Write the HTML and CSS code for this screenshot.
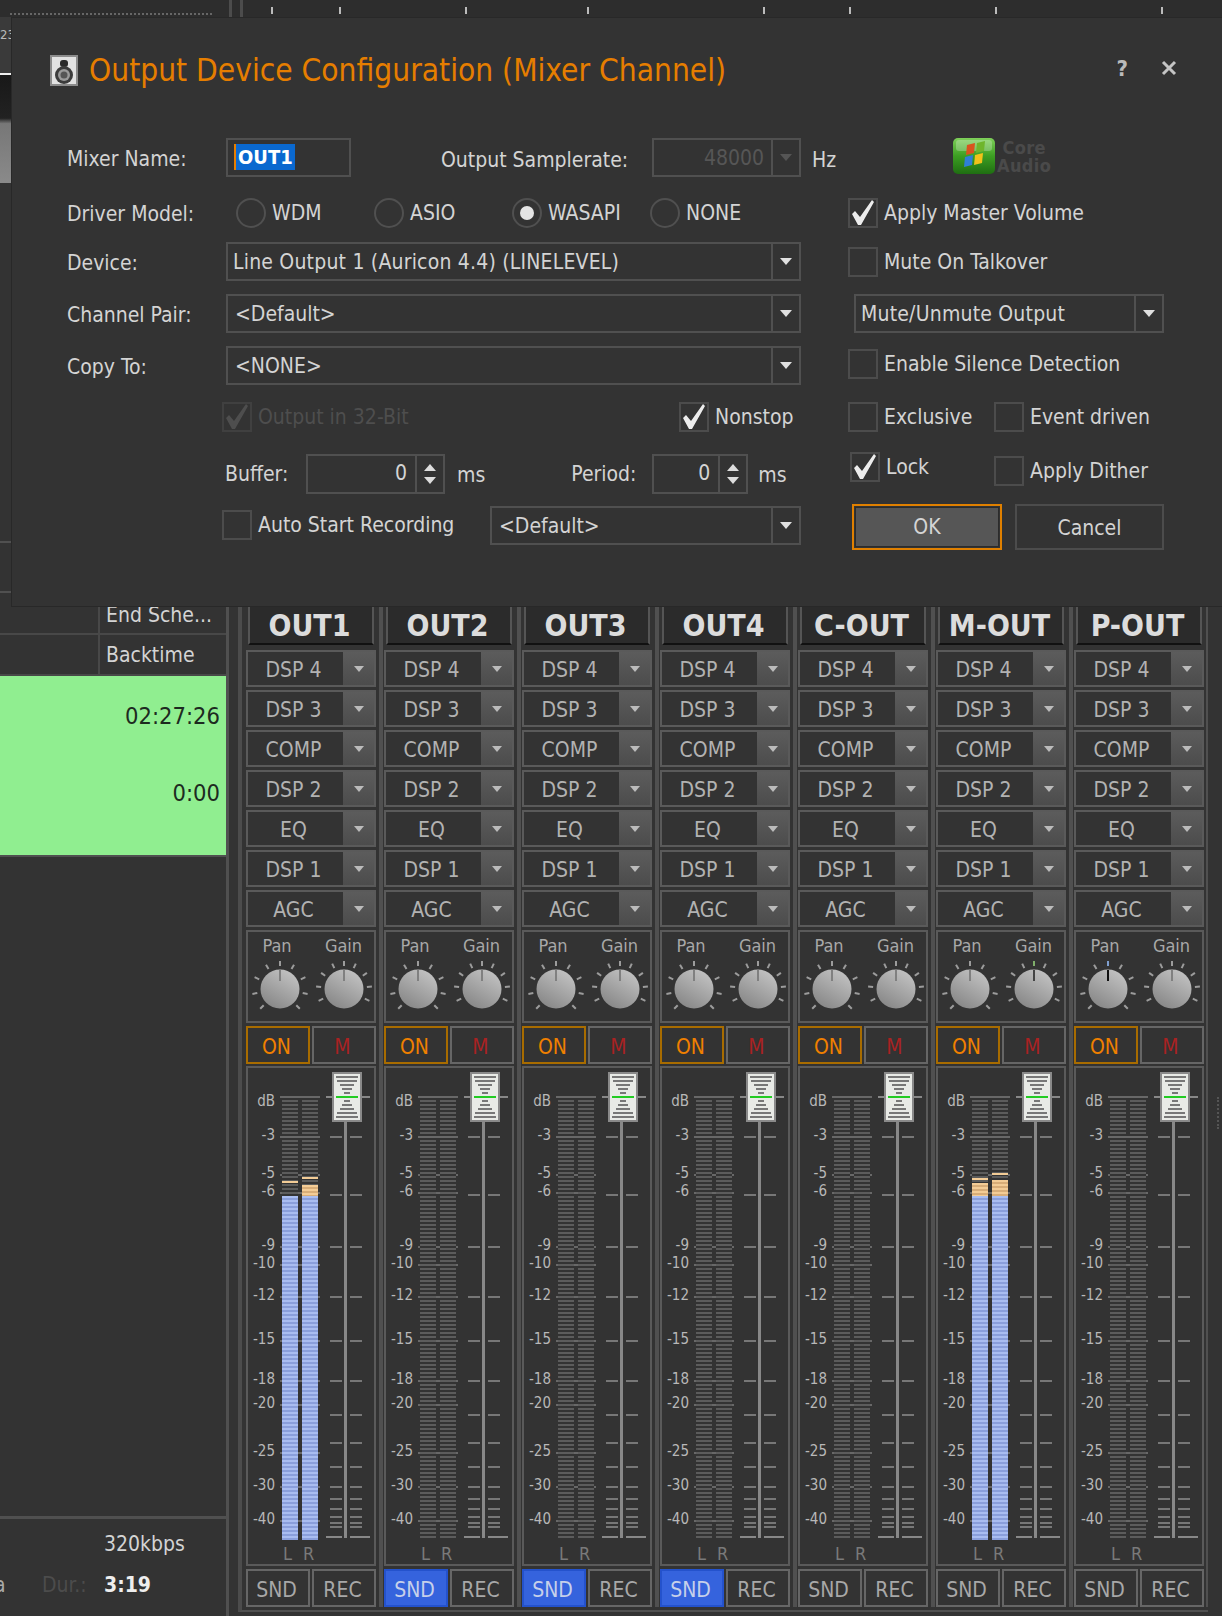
FILE: index.html
```html
<!DOCTYPE html>
<html lang="en">
<head>
  <meta charset="UTF-8" />
  <title>Output Device Configuration</title>
  <link rel="stylesheet" href="styles.css">
</head>
<body>

  <svg class="defs" width="0" height="0">
    <defs>
      <linearGradient id="knobFill" x1="0.8" y1="0" x2="0.2" y2="1">
        <stop offset="0" stop-color="#c4c4c4" />
        <stop offset="1" stop-color="#858585" />
      </linearGradient>
      <linearGradient id="logoFill" x1="0" y1="0" x2="0" y2="1">
        <stop offset="0" stop-color="#7fd05a" />
        <stop offset="0.5" stop-color="#3c9e22" />
        <stop offset="1" stop-color="#1f6e12" />
      </linearGradient>
    </defs>
  </svg>

  <div class="topbar">
    <div class="dotted"></div>
    <div class="topbar-lines"></div>
    <i class="tick t1"></i><i class="tick t2"></i><i class="tick t3"></i><i class="tick t4"></i>
    <i class="tick t5"></i><i class="tick t6"></i><i class="tick t7"></i><i class="tick t8"></i>
  </div>

  <div class="main">
    <div class="side">
      <div class="wave-top"><span>23</span></div>
      <div class="wave"></div>
      <div class="side-block b1"></div>
      <div class="side-block b2"></div>
      <div class="side-row r1"><span>End Sche...</span></div>
      <div class="side-row r2"><span>Backtime</span></div>
      <div class="green">
        <div>02:27:26</div>
        <div>0:00</div>
      </div>
      <div class="side-fill"></div>
      <div class="info">
        <div class="info-row"><span class="info-val">320kbps</span></div>
        <div class="info-row"><span class="info-a">a</span><span class="info-key">Dur.:</span><span class="info-val strong">3:19</span></div>
        <div class="info-row"><span class="info-val dim">10:51</span></div>
      </div>
    </div>
    <div class="mixer" id="mixer"></div>
    <div class="grip"></div>
  </div>

  <div class="dialog">
    <div class="dialog-head">
      <svg class="speaker" width="28" height="31" viewBox="0 0 28 31">
        <rect x="0" y="0" width="28" height="31" fill="#8c8c8c" />
        <rect x="2" y="2" width="24" height="27" fill="#e2e2e2" />
        <rect x="10" y="5" width="8" height="7" rx="3" fill="#2a2a2a" />
        <circle cx="14" cy="20" r="9" fill="#3c3c3c" />
        <circle cx="14" cy="20" r="6" fill="#9a9a9a" />
        <circle cx="14" cy="20" r="3.5" fill="#555" />
      </svg>
      <h1>Output Device Configuration (Mixer Channel)</h1>
      <span class="head-btn help">?</span>
      <svg class="head-btn close" width="16" height="16" viewBox="0 0 16 16">
        <path d="M2 2 L14 14 M14 2 L2 14" stroke="#c4c4c4" stroke-width="3" />
      </svg>
    </div>

    <div class="form">
      <div class="row">
        <span class="label">Mixer Name:</span>
        <div class="field name-field"><span class="selected">OUT1</span></div>
        <span class="label rate-label">Output Samplerate:</span>
        <div class="combo rate disabled"><span class="combo-text right">48000</span><span class="drop"></span></div>
        <span class="unit hz">Hz</span>
      </div>
      <div class="row">
        <div class="logo">
          <svg width="42" height="36" viewBox="0 0 42 36">
            <rect x="0" y="0" width="42" height="36" rx="5" fill="url(#logoFill)" />
            <rect x="3" y="2" width="36" height="11" rx="3" fill="#ffffff" opacity="0.25" />
            <path d="M14 7 L22 5 L21 15 L13 17 Z" fill="#d9531e" />
            <path d="M24 5 L32 3 L31 13 L23 15 Z" fill="#6fb52c" />
            <path d="M12 19 L20 17 L19 27 L11 29 Z" fill="#2f7fd6" />
            <path d="M22 17 L30 15 L29 25 L21 27 Z" fill="#f2c21a" />
          </svg>
          <span class="logo-text">Core<br>Audio</span>
        </div>
      </div>

      <div class="row">
        <span class="label">Driver Model:</span>
        <div class="radios">
          <span class="radio"><i class="dot"></i>WDM</span>
          <span class="radio"><i class="dot"></i>ASIO</span>
          <span class="radio"><i class="dot on"></i>WASAPI</span>
          <span class="radio"><i class="dot"></i>NONE</span>
        </div>
      </div>
      <div class="row">
        <span class="check"><i class="box on"></i>Apply Master Volume</span>
      </div>

      <div class="row">
        <span class="label">Device:</span>
        <div class="combo grow"><span class="combo-text tight">Line Output 1 (Auricon 4.4) (LINELEVEL)</span><span class="drop"></span></div>
      </div>
      <div class="row">
        <span class="check"><i class="box"></i>Mute On Talkover</span>
      </div>

      <div class="row">
        <span class="label">Channel Pair:</span>
        <div class="combo grow"><span class="combo-text">&lt;Default&gt;</span><span class="drop"></span></div>
      </div>
      <div class="row">
        <div class="combo mute"><span class="combo-text tight">Mute/Unmute Output</span><span class="drop"></span></div>
      </div>

      <div class="row">
        <span class="label">Copy To:</span>
        <div class="combo grow"><span class="combo-text">&lt;NONE&gt;</span><span class="drop"></span></div>
      </div>
      <div class="row up">
        <span class="check"><i class="box"></i>Enable Silence Detection</span>
      </div>

      <div class="row indent">
        <span class="check off wide"><i class="box on"></i>Output in 32-Bit</span>
        <span class="check"><i class="box on"></i>Nonstop</span>
      </div>
      <div class="row">
        <span class="check pair"><i class="box"></i>Exclusive</span>
        <span class="check"><i class="box"></i>Event driven</span>
      </div>

      <div class="row indent-b">
        <span class="label short">Buffer:</span>
        <div class="spin buffer"><span class="spin-val">0</span><span class="spin-btns"><i class="up-arrow"></i><i class="down-arrow"></i></span></div>
        <span class="unit ms">ms</span>
        <span class="label period">Period:</span>
        <div class="spin period-box"><span class="spin-val">0</span><span class="spin-btns"><i class="up-arrow"></i><i class="down-arrow"></i></span></div>
        <span class="unit ms last">ms</span>
      </div>
      <div class="row">
        <span class="check lock"><i class="box on"></i>Lock</span>
        <span class="check dither"><i class="box"></i>Apply Dither</span>
      </div>

      <div class="row indent">
        <span class="check auto"><i class="box"></i>Auto Start Recording</span>
        <div class="combo grow"><span class="combo-text">&lt;Default&gt;</span><span class="drop"></span></div>
      </div>
      <div class="row buttons">
        <div class="btn ok"><span>OK</span></div>
        <div class="btn cancel">Cancel</div>
      </div>
    </div>
  </div>

  <script src="script.js"></script>
</body>
</html>
```

FILE: styles.css
```css
* {
  box-sizing: border-box;
}

html, body {
  margin: 0;
  padding: 0;
}

body {
  width: 1222px;
  height: 1616px;
  overflow: hidden;
  position: relative;
  background: #333;
  color: #d4d4d4;
  font-family: "DejaVu Sans Condensed", "DejaVu Sans", sans-serif;
  font-stretch: condensed;
  font-size: 21px;
}

i {
  display: block;
}

.defs {
  position: absolute;
}

/* top ruler behind the dialog */
.topbar {
  height: 17px;
  background: #2d2d2d;
  position: relative;
}

.dotted {
  position: absolute;
  left: 10px;
  top: 13px;
  width: 202px;
  border-top: 2px dotted #666;
}

.topbar-lines {
  position: absolute;
  left: 229px;
  top: 0;
  width: 14px;
  height: 17px;
  border-left: 3px solid #4c4c4c;
  border-right: 3px solid #4c4c4c;
}

.tick {
  position: absolute;
  top: 7px;
  width: 2px;
  height: 7px;
  background: #bbb;
}

.t1 { left: 271px; }
.t2 { left: 339px; }
.t3 { left: 465px; }
.t4 { left: 587px; }
.t5 { left: 763px; }
.t6 { left: 849px; }
.t7 { left: 995px; }
.t8 { left: 1161px; }

.main {
  display: flex;
  height: 1599px;
}

/* left column */
.side {
  width: 229px;
  flex: none;
  border-right: 3px solid #505050;
  display: flex;
  flex-direction: column;
}

.side > * {
  flex: none;
}

.wave-top {
  height: 58px;
  background: #3a3a3a;
  border-bottom: 2px solid #eee;
  font-size: 13px;
  padding-top: 10px;
  color: #bbb;
}

.wave {
  height: 108px;
  background: linear-gradient(#181818 0, #222 40%, #777 45%, #8a8a8a 100%);
}

.side-block.b1 {
  height: 360px;
  border-bottom: 2px solid #505050;
}

.side-block.b2 {
  height: 50px;
  border-bottom: 2px solid #505050;
}

.side-row {
  padding-left: 106px;
  border-bottom: 2px solid #484848;
  position: relative;
  display: flex;
  align-items: center;
}

.side-row::before {
  content: "";
  position: absolute;
  left: 98px;
  top: 0;
  bottom: 0;
  border-left: 2px solid #484848;
}

.r1 {
  height: 42px;
  padding-top: 3px;
}

.r2 {
  height: 41px;
}

.green {
  height: 181px;
  background: #90ee90;
  color: #1d2a20;
  font-size: 23.5px;
  text-align: right;
  padding: 26px 6px 0 0;
  border-bottom: 2px solid #505050;
  display: flex;
  flex-direction: column;
  gap: 49px;
}

.side-fill {
  height: 662px;
  border-bottom: 3px solid #505050;
}

.info {
  padding-top: 4px;
}

.info-row {
  height: 41px;
  display: flex;
  align-items: center;
  position: relative;
  padding-left: 104px;
}

.info-val.strong {
  font-weight: bold;
  color: #eee;
}

.info-val.dim {
  color: #999;
}

.info-a {
  position: absolute;
  left: -6px;
  color: #aaa;
}

.info-key {
  position: absolute;
  left: 42px;
  color: #4c4c4c;
}

/* mixer strips */
.mixer {
  margin-left: 9px;
  border-left: 4px solid #4c4c4c;
  padding: 583px 0 3px 4px;
  border-bottom: 2px solid #505050;
  height: 1595px;
  display: flex;
  flex: none;
}

.strip {
  width: 137px;
  margin-right: 1px;
  padding-right: 3px;
  border-right: 4px solid #505050;
  display: flex;
  flex-direction: column;
  gap: 3px;
}

.strip:last-child {
  margin-right: 0;
  padding-right: 2px;
  width: 134px;
  border-right-width: 2px;
}

.strip-name {
  height: 45px;
  margin: 0 2px 2px;
  border-left: 2px solid #555;
  border-right: 2px solid #555;
  border-bottom: 2px solid #111;
  background: #2b2b2b;
  text-align: center;
  color: #dcdcdc;
  font-size: 30px;
  font-weight: bold;
  line-height: 45px;
  padding: 3px 3px 0 0;
}

.dsp {
  height: 37px;
  border: 2px solid #5a5a5a;
  display: flex;
  color: #b2b2b2;
  font-size: 21px;
}

.dsp-name {
  flex: 1;
  text-align: center;
  line-height: 36px;
  padding-right: 4px;
}

.dsp-drop {
  width: 31px;
  background: linear-gradient(#5c5c5c, #4c4c4c);
  display: flex;
  align-items: center;
  justify-content: center;
}

.arrow {
  width: 0;
  height: 0;
  border-left: 6px solid transparent;
  border-right: 6px solid transparent;
  border-top: 7px solid #d8d8d8;
}

.dsp-drop .arrow {
  border-left-width: 5px;
  border-right-width: 5px;
  border-top-width: 6px;
  border-top-color: #bbb;
}

.knobs {
  height: 93px;
  border: 2px solid #5a5a5a;
  display: flex;
}

.knob {
  width: 63px;
  text-align: center;
  color: #a8a8a8;
  font-size: 18px;
  line-height: 20px;
  padding-top: 4px;
}

.knob svg {
  display: block;
  margin: 1px auto 0;
}

.knob.pan {
  text-indent: -5px;
}

.knob.gain {
  margin-left: 1px;
}

.switches {
  display: flex;
  gap: 2px;
}

.switch {
  flex: 1;
  height: 38px;
  border: 2px solid #666;
  text-align: center;
  line-height: 38px;
  font-size: 21px;
  padding-right: 3px;
}

.switch.on-btn {
  border-color: #a86c00;
  color: #f08000;
}

.switch.mute-btn {
  color: #a82222;
}

.fader {
  height: 501px;
  margin-top: -1px;
  border: 2px solid #5a5a5a;
  position: relative;
}

.db {
  position: absolute;
  left: 0;
  width: 27px;
  text-align: right;
  font-size: 15px;
  line-height: 16px;
  margin-top: -7px;
  color: #b8b8b8;
  white-space: nowrap;
}

.meter-tick {
  position: absolute;
  left: 32px;
  width: 40px;
  height: 2px;
  background: #686868;
}

.meter-tick.over {
  z-index: 1;
}

.meter {
  position: absolute;
  top: 32px;
  width: 16px;
  height: 440px;
  background: repeating-linear-gradient(#5c5c5c 0 2px, #333 2px 4px);
}

.meter.l { left: 34px; }
.meter.r { left: 54px; }

.lit {
  position: absolute;
  left: 0;
  width: 16px;
  background: repeating-linear-gradient(#a9bdf1 0 2px, #8a9fdc 2px 4px);
  bottom: 0;
}

.hot {
  position: absolute;
  left: 0;
  width: 16px;
  background: repeating-linear-gradient(#f3cc96 0 2px, #d8ad78 2px 4px);
}

.peak {
  position: absolute;
  left: 0;
  width: 16px;
  height: 2px;
  background: #f3cc96;
}

.track {
  position: absolute;
  left: 96px;
  top: 50px;
  width: 3px;
  height: 420px;
  background: #888;
}

.fader-tick {
  position: absolute;
  left: 82px;
  width: 32px;
  height: 2px;
  background: linear-gradient(90deg, #777 0 12px, transparent 12px 20px, #777 20px);
}

.fader-tick.long {
  left: 78px;
  width: 44px;
  background: linear-gradient(90deg, #888 0 16px, transparent 16px 24px, #888 24px);
}

.handle {
  position: absolute;
  left: 84px;
  top: 4px;
}

.channel-lr {
  position: absolute;
  left: 35px;
  top: 476px;
  color: #7a7a7a;
  font-size: 18px;
  line-height: 20px;
  display: flex;
  gap: 11px;
}

.switch.snd-on {
  background: #3563dd;
  border-color: #2452cc;
}

.strip .switch.plain {
  color: #a8a8a8;
}

.strip .switch.snd-on {
  color: #c6d0ea;
}

.grip {
  width: 2px;
  height: 32px;
  margin: 1080px 0 0 9px;
  border-left: 2px dotted #555;
}

/* dialog */
.dialog {
  position: absolute;
  left: 11px;
  top: 17px;
  width: 1211px;
  height: 590px;
  background: #333;
  border: 1px solid #282828;
  border-right: none;
  z-index: 2;
}

.dialog-head {
  display: flex;
  align-items: center;
  height: 120px;
  padding: 0 45px 16px 38px;
}

.speaker {
  flex: none;
}

h1 {
  margin: 0 0 0 11px;
  flex: 1;
  font-size: 31.4px;
  font-weight: normal;
  color: #e67e00;
  white-space: nowrap;
}

.head-btn {
  margin-bottom: 4px;
}

.help {
  font-size: 22px;
  font-weight: bold;
  color: #bbb;
  margin-right: 33px;
}

.form {
  display: grid;
  grid-template-columns: 734px 316px;
  grid-template-rows: 55px 49px 52px 52px 51px 57px 52px 46px;
  column-gap: 47px;
  margin-left: 55px;
}

.row {
  display: flex;
  align-items: flex-start;
  height: 40px;
  white-space: nowrap;
}

.row > * {
  flex: none;
}

.label {
  width: 159px;
  line-height: 42px;
}

.label.short {
  width: 81px;
}

.rate-label {
  width: 211px;
  margin-left: 90px;
  line-height: 44px;
}

.field, .combo, .spin {
  height: 39px;
  border: 2px solid #505050;
  display: flex;
}

.name-field {
  width: 125px;
  padding: 4px 0 0 6px;
}

.selected {
  height: 26px;
  line-height: 27px;
  padding-left: 2px;
  padding-right: 2px;
  background: #0a68cf;
  color: #fff;
  border-left: 2px solid #e67e00;
  font-weight: bold;
  font-size: 20px;
}

.row > .combo.grow {
  flex: 1;
}

.combo.rate {
  width: 149px;
}

.combo.mute {
  width: 310px;
  margin-left: 6px;
}

.combo-text {
  flex: 1;
  line-height: 37px;
  padding-left: 7px;
}

.combo-text.tight {
  padding-left: 5px;
  letter-spacing: 0.2px;
}

.combo-text.right {
  text-align: right;
  padding-right: 7px;
}

.disabled .combo-text {
  color: #565656;
}

.drop {
  width: 28px;
  border-left: 2px solid #505050;
  display: flex;
  align-items: center;
  justify-content: center;
}

.drop::after {
  content: "";
  border-left: 6px solid transparent;
  border-right: 6px solid transparent;
  border-top: 7px solid #e0e0e0;
}

.disabled .drop::after {
  border-top-color: #555;
}

.unit {
  line-height: 44px;
}

.hz {
  margin-left: 11px;
}

.ms {
  margin-left: 12px;
  line-height: 42px;
}

.ms.last {
  margin-left: 10px;
}

.logo {
  display: flex;
  margin-left: 105px;
}

.logo-text {
  margin: 1px 0 0 2px;
  color: #4a4a4a;
  font-weight: bold;
  font-size: 18px;
  line-height: 18px;
  letter-spacing: 0.4px;
  text-align: center;
}

.radios {
  display: flex;
  margin-left: 10px;
  padding-top: 5px;
}

.radio {
  width: 138px;
  display: flex;
  align-items: center;
  gap: 6px;
}

.dot {
  width: 30px;
  height: 30px;
  border: 2px solid #505050;
  border-radius: 50%;
  display: flex;
  align-items: center;
  justify-content: center;
}

.dot.on::after {
  content: "";
  width: 14px;
  height: 14px;
  border-radius: 50%;
  background: #e4e4e4;
}

.check {
  display: flex;
  align-items: center;
  gap: 6px;
  height: 30px;
  margin-top: 5px;
}

.box {
  width: 30px;
  height: 30px;
  border: 2px solid #4c4c4c;
  position: relative;
}

.box.on::after {
  content: "";
  position: absolute;
  inset: 0;
  background: #ececec;
  clip-path: polygon(2px 14px, 5px 11px, 10px 17px, 22px 0, 24px 2px, 11px 25px, 8px 25px);
}

.check.off {
  color: #4e4e4e;
}

.check.off .box {
  border-color: #404040;
}

.check.off .box.on::after {
  background: #4e4e4e;
}

.indent {
  padding-left: 155px;
}

.indent-b {
  padding-left: 158px;
}

.wide {
  width: 457px;
}

.auto {
  width: 268px;
  margin-top: 4px;
}

.row.up .check {
  margin-top: 3px;
}

.pair {
  width: 146px;
}

.spin {
  height: 40px;
}

.buffer {
  width: 139px;
}

.period-box {
  width: 96px;
}

.spin-val {
  flex: 1;
  text-align: right;
  padding-right: 8px;
  line-height: 35px;
}

.spin-btns {
  width: 28px;
  border-left: 2px solid #505050;
  display: flex;
  flex-direction: column;
  align-items: center;
  justify-content: center;
  gap: 6px;
}

.up-arrow, .down-arrow {
  width: 0;
  height: 0;
  border-left: 6px solid transparent;
  border-right: 6px solid transparent;
}

.up-arrow {
  border-bottom: 7px solid #ddd;
}

.down-arrow {
  border-top: 7px solid #ddd;
}

.label.period {
  width: 81px;
  margin-left: 86px;
  line-height: 40px;
}

.label.short {
  line-height: 40px;
}

.lock {
  width: 144px;
  margin-left: 2px;
  margin-top: -2px;
}

.dither {
  margin-top: 2px;
}

.buttons {
  height: 46px;
  margin-top: -2px;
}

.btn {
  height: 46px;
  text-align: center;
  line-height: 44px;
}

.ok {
  width: 150px;
  margin-left: 4px;
  border: 2px solid #e08000;
  background: #333;
  padding: 1px;
}

.ok span {
  display: block;
  height: 40px;
  line-height: 38px;
  background: #565656;
  border: 1px solid #2c2c2c;
}

.cancel {
  width: 149px;
  margin-left: 13px;
  border: 2px solid #4c4c4c;
}
```

FILE: script.js
```js
// mixer strips, all the same except for name, meters and knob pointers
const channels = [
  { name: "OUT1", meter: { l: { peak: 1181, hot: 1196 }, r: { peak: 1177, hot: 1185 } } },
  { name: "OUT2", snd: true },
  { name: "OUT3", snd: true },
  { name: "OUT4", snd: true },
  { name: "C-OUT" },
  { name: "M-OUT", gain: "moved", meter: { l: { peak: 1178, hot: 1183 }, r: { peak: 1173, hot: 1180 } } },
  { name: "P-OUT", pan: "moved" }
];

const dspNames = ["DSP 4", "DSP 3", "COMP", "DSP 2", "EQ", "DSP 1", "AGC"];

// [label, label centre, tick y], in page pixels
const dbScale = [
  ["dB", 1100, 1097], ["-3", 1134, 1137], ["-5", 1172, 1175], ["-6", 1190, 1193],
  ["-9", 1244, 1247], ["-10", 1262, 1265], ["-12", 1294, 1297], ["-15", 1338, 1341],
  ["-18", 1378, 1381], ["-20", 1402, 1405], ["-25", 1450, 1453], ["-30", 1484, 1487],
  ["-40", 1518, 1521]
];

const faderTicks = [1137, 1195, 1247, 1297, 1341, 1381, 1415, 1443, 1467, 1487, 1499, 1509, 1517, 1523, 1527];

const FADER_TOP = 1068;
const METER_BOTTOM = 1540;

function knob(kind, state) {
  const angles = kind === "pan"
    ? [0, 30, 65, 100, 135, -30, -65, -100, -135]
    : [0, 25, 55, 85, 115, -25, -55, -85, -115];

  const ticks = angles.map(a => {
    const r = (a - 90) * Math.PI / 180;
    const x1 = 32 + 23 * Math.cos(r), y1 = 32 + 23 * Math.sin(r);
    const x2 = 32 + 28 * Math.cos(r), y2 = 32 + 28 * Math.sin(r);
    let color = "#9c9c9c";
    if (a === 0 && state) color = kind === "pan" ? "#7f9fd0" : "#7fae6a";
    return `<line x1="${x1.toFixed(1)}" y1="${y1.toFixed(1)}" x2="${x2.toFixed(1)}" y2="${y2.toFixed(1)}" stroke="${color}" stroke-width="2" />`;
  }).join("");

  const pointer = state ? (kind === "pan" ? "#111" : "#444") : "#808080";

  return `<svg width="64" height="64" viewBox="0 0 64 64">
    ${ticks}
    <circle cx="32" cy="32" r="19.5" fill="url(#knobFill)" />
    <line x1="32" y1="13" x2="32" y2="24" stroke="${pointer}" stroke-width="2" />
  </svg>`;
}

function handle() {
  const widths = [22, 20, 14, 10, 6, 0, 6, 10, 14, 20, 22];
  const bars = widths.map((w, i) => {
    if (i === 5) return `<rect x="4" y="24" width="22" height="2" fill="#22cc22" />`;
    return `<rect x="${(30 - w) / 2}" y="${4 + i * 4}" width="${w}" height="2" fill="#777" />`;
  }).join("");
  return `<svg class="handle" width="30" height="50" viewBox="0 0 30 50">
    <rect x="1" y="1" width="28" height="48" fill="#e8eae6" stroke="#8a8a8a" stroke-width="2" />
    ${bars}
  </svg>`;
}

function meterBar(side, level) {
  let inner = "";
  if (level) {
    inner += `<i class="lit" style="height:${METER_BOTTOM - 1196}px"></i>`;
    if (level.hot < 1196) {
      inner += `<i class="hot" style="top:${level.hot - 1100}px;height:${1196 - level.hot}px"></i>`;
    }
    inner += `<i class="peak" style="top:${level.peak - 1100}px"></i>`;
  }
  return `<div class="meter ${side}">${inner}</div>`;
}

function faderPanel(ch) {
  const labels = dbScale.map(([text, y]) =>
    `<span class="db" style="top:${y - FADER_TOP}px">${text}</span>`).join("");
  // the two top lines run across the meters, the others stay behind them
  const lines = dbScale.map(([, , y], i) =>
    `<i class="meter-tick ${i < 2 ? "over" : ""}" style="top:${y - 1 - FADER_TOP}px"></i>`).join("");
  const marks = faderTicks.map(y =>
    `<i class="fader-tick" style="top:${y - 1 - FADER_TOP}px"></i>`).join("");
  const level = ch.meter || {};

  return `<div class="fader">
    ${labels}
    ${lines}
    ${meterBar("l", level.l)}
    ${meterBar("r", level.r)}
    <i class="track"></i>
    ${marks}
    <i class="fader-tick long" style="top:${1537 - 1 - FADER_TOP}px"></i>
    <i class="fader-tick long" style="top:${1097 - 1 - FADER_TOP}px"></i>
    ${handle()}
    <div class="channel-lr"><span>L</span><span>R</span></div>
  </div>`;
}

function strip(ch) {
  const rows = dspNames.map(d =>
    `<div class="dsp"><span class="dsp-name">${d}</span><span class="dsp-drop"><i class="arrow"></i></span></div>`).join("");

  return `<div class="strip">
    <div class="strip-name">${ch.name}</div>
    ${rows}
    <div class="knobs">
      <div class="knob pan">Pan${knob("pan", ch.pan)}</div>
      <div class="knob gain">Gain${knob("gain", ch.gain)}</div>
    </div>
    <div class="switches">
      <div class="switch on-btn">ON</div>
      <div class="switch mute-btn">M</div>
    </div>
    ${faderPanel(ch)}
    <div class="switches">
      <div class="switch plain ${ch.snd ? "snd-on" : ""}">SND</div>
      <div class="switch plain">REC</div>
    </div>
  </div>`;
}

document.getElementById("mixer").innerHTML = channels.map(strip).join("");
```
